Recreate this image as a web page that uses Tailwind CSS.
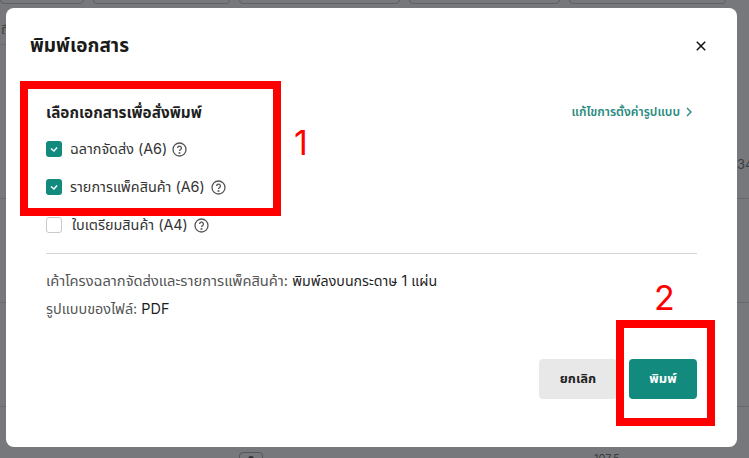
<!doctype html>
<html>
<head>
  <meta charset="UTF-8">
  <script src="https://cdn.jsdelivr.net/npm/@tailwindcss/browser@4"></script>
</head>
<body class="w-[749px] h-[458px] overflow-hidden relative bg-[#77787c] font-['Inter','Noto_Sans_Thai',sans-serif]">

<!-- page behind the overlay -->
<div class="absolute inset-0">
  <div class="flex gap-[9px] h-[5px] -mt-px">
    <div class="w-[84px] rounded-b border border-[#5f6064]"></div>
    <div class="w-[137px] rounded-b border border-[#5f6064]"></div>
    <div class="w-[161px] rounded-b border border-[#5f6064]"></div>
    <div class="w-[151px] rounded-b border border-[#5f6064]"></div>
    <div class="w-[157px] rounded-b border border-[#5f6064]"></div>
  </div>
  <div class="absolute left-0 right-0 top-[198px] h-px bg-[#68696d]"></div>
  <div class="absolute left-0 right-0 top-[302px] h-px bg-[#68696d]"></div>
  <div class="absolute left-0 right-0 top-[406px] h-px bg-[#68696d]"></div>
  <div class="absolute left-0 w-[6px] top-[44px] h-px bg-[#68696d]"></div>
  <div class="absolute left-[1px] top-[20px] text-[13px] text-[#3c3d40]">ถึ</div>
  <div class="absolute left-[737px] top-[155px] text-[13px] text-[#3c3d40]">34</div>
  <div class="absolute left-[239px] top-[452px] w-[24px] h-[10px] rounded border border-[#55565a] flex justify-center pt-[3px]">
    <span class="w-[6px] h-[6px] rounded-full bg-[#2f3033]"></span>
  </div>
  <div class="absolute left-[594px] top-[453px] text-[11px] leading-none text-[#3c3d40]">107.5</div>
</div>

<!-- modal -->
<div class="absolute left-[6px] top-[8px] w-[731px] h-[439px] bg-white rounded-[8px] flex flex-col">
  <div class="flex items-center justify-between h-[76px] pl-[24px] pr-[31px]">
    <h2 class="text-[19px] font-bold text-[#1a1a1a]">พิมพ์เอกสาร</h2>
    <svg width="10" height="10" viewBox="0 0 10 10" fill="none" stroke="#111" stroke-width="1.5"><path d="M.8.8l8.4 8.4M9.2.8L.8 9.2"/></svg>
  </div>

  <div class="px-[40px] flex flex-col flex-1">
    <div class="flex justify-between items-center mt-[17px] h-[24px]">
      <div class="text-[15.3px] font-bold text-[#1f1f1f]">เลือกเอกสารเพื่อสั่งพิมพ์</div>
      <a class="flex items-center gap-[6px] text-[12.2px] font-semibold text-[#2a8a80] mr-[5px] -mt-[2px]">แก้ไขการตั้งค่ารูปแบบ
        <svg width="6" height="10" viewBox="0 0 6 10" fill="none" stroke="#2a8a80" stroke-width="1.4"><path d="M1 1l4 4-4 4"/></svg>
      </a>
    </div>

    <div class="flex flex-col gap-[22px] mt-[16px] text-[14.4px] text-[#333]">
      <div class="flex items-center gap-[8px] h-[16px]">
        <span class="w-[16px] h-[16px] rounded-[3px] bg-[#138a7e] flex items-center justify-center">
          <svg width="8" height="6" viewBox="0 0 8 6" fill="none" stroke="white" stroke-width="1.4"><path d="M1 2.5l3 2.5 3-3.5"/></svg>
        </span>
        <span>ฉลากจัดส่ง (A6)</span>
        <svg class="-ml-[3px]" width="15" height="15" viewBox="0 0 15 15" fill="none" stroke="#555" stroke-width="1.3"><circle cx="7.5" cy="7.5" r="6.5"/><path d="M5.6 6a1.9 1.9 0 1 1 2.9 1.6c-.7.4-1 .8-1 1.5"/><circle cx="7.5" cy="11" r=".4"/></svg>
      </div>
      <div class="flex items-center gap-[8px] h-[16px]">
        <span class="w-[16px] h-[16px] rounded-[3px] bg-[#138a7e] flex items-center justify-center">
          <svg width="8" height="6" viewBox="0 0 8 6" fill="none" stroke="white" stroke-width="1.4"><path d="M1 2.5l3 2.5 3-3.5"/></svg>
        </span>
        <span>รายการแพ็คสินค้า (A6)</span>
        <svg class="-ml-[2px]" width="15" height="15" viewBox="0 0 15 15" fill="none" stroke="#555" stroke-width="1.3"><circle cx="7.5" cy="7.5" r="6.5"/><path d="M5.6 6a1.9 1.9 0 1 1 2.9 1.6c-.7.4-1 .8-1 1.5"/><circle cx="7.5" cy="11" r=".4"/></svg>
      </div>
      <div class="flex items-center gap-[10px] h-[16px]">
        <span class="w-[16px] h-[16px] rounded-[3px] border border-[#c9c9c9] bg-white"></span>
        <span>ใบเตรียมสินค้า (A4)</span>
        <svg class="-ml-[4px]" width="15" height="15" viewBox="0 0 15 15" fill="none" stroke="#555" stroke-width="1.3"><circle cx="7.5" cy="7.5" r="6.5"/><path d="M5.6 6a1.9 1.9 0 1 1 2.9 1.6c-.7.4-1 .8-1 1.5"/><circle cx="7.5" cy="11" r=".4"/></svg>
      </div>
    </div>

    <div class="h-px bg-[#d4d4d4] mt-[20px]"></div>

    <div class="mt-[17px] text-[14.7px] leading-[20px] text-[#555]">เค้าโครงฉลากจัดส่งและรายการแพ็คสินค้า: <span class="text-[14.2px] text-[#1f1f1f]">พิมพ์ลงบนกระดาษ 1 แผ่น</span></div>
    <div class="mt-[8px] text-[14.4px] leading-[20px] text-[#555]">รูปแบบของไฟล์: <span class="text-[#1f1f1f]">PDF</span></div>

    <div class="flex-1"></div>
    <div class="flex justify-end gap-[12px] mb-[48px]">
      <button class="w-[78px] h-[40px] rounded bg-[#e8e8e8] text-[13px] font-bold text-[#222]">ยกเลิก</button>
      <button class="w-[68px] h-[40px] rounded bg-[#138a7e] text-[13px] font-bold text-white">พิมพ์</button>
    </div>
  </div>
</div>

<!-- red annotations drawn on top -->
<div class="absolute left-[20px] top-[81px] w-[261px] h-[135px] border-[8px] border-[#ff0000]"></div>
<div class="absolute left-[616px] top-[320px] w-[99px] h-[106px] border-[8px] border-[#ff0000]"></div>
<div class="absolute left-[294px] top-[120px] text-[34px] leading-[46px] text-[#ff0000]">1</div>
<div class="absolute left-[654px] top-[275px] text-[34px] leading-[46px] text-[#ff0000]">2</div>

</body>
</html>
